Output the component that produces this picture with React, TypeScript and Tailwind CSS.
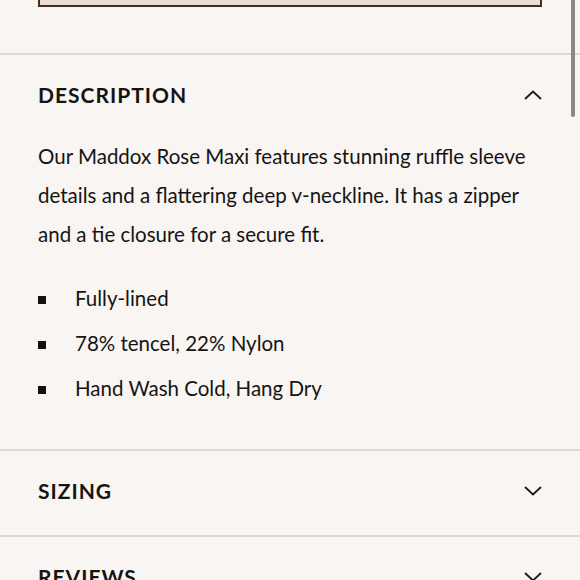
import React from "react";

function Chevron({ up }: { up?: boolean }) {
  return (
    <svg width="18" height="10" viewBox="0 0 18 10" fill="none" className="shrink-0">
      <polyline
        points={up ? "1,9 9,1.5 17,9" : "1,1 9,8.5 17,1"}
        stroke="#1a1a1a"
        strokeWidth="1.8"
      />
    </svg>
  );
}

export default function App() {
  const body = { fontFamily: "Lato, 'Open Sans', sans-serif" };
  return (
    <div className="relative w-[580px] h-[580px] overflow-hidden bg-[#f8f5f2] text-[#161413]" style={body}>
      <div className="px-[38px]">
        <div className="h-[7px] border-2 border-t-0 border-[#3b302c] bg-[#ecdcd2]" />
      </div>
      <div className="h-[46px]" />
      <section className="border-t-2 border-[#dcd8d5]">
        <div className="flex items-center justify-between pl-[38px] pr-[38px] pt-[25px] h-[55px]">
          <h2 className="text-[21px] leading-[30px] font-bold tracking-[1px]">DESCRIPTION</h2>
          <Chevron up />
        </div>
        <div className="px-[38px] pt-[27px] pb-[38px]">
          <p className="text-[20.5px] leading-[39px]">
            Our Maddox Rose Maxi features stunning ruffle sleeve details and a flattering deep v-neckline. It has a zipper and a tie closure for a secure fit.
          </p>
          <ul className="mt-[22px]">
            {["Fully-lined", "78% tencel, 22% Nylon", "Hand Wash Cold, Hang Dry"].map((t) => (
              <li key={t} className="flex items-center h-[45px] text-[20.5px]">
                <span className="w-[8px] h-[8px] bg-[#111] mr-[29px] mt-[2px]" />
                {t}
              </li>
            ))}
          </ul>
        </div>
      </section>
      <section className="border-t-2 border-[#dcd8d5]">
        <div className="flex items-center justify-between px-[38px] h-[84px] pb-[4px]">
          <h2 className="text-[21px] leading-[30px] font-bold tracking-[1px]">SIZING</h2>
          <Chevron />
        </div>
      </section>
      <section className="border-t-2 border-[#dcd8d5]">
        <div className="flex items-center justify-between px-[38px] h-[84px] pb-[4px]">
          <h2 className="text-[21px] leading-[30px] font-bold tracking-[1px]">REVIEWS</h2>
          <Chevron />
        </div>
      </section>
      <div className="absolute right-[5px] top-0 w-[4px] h-[117px] rounded-b-full bg-[#8a8786]" />
    </div>
  );
}
